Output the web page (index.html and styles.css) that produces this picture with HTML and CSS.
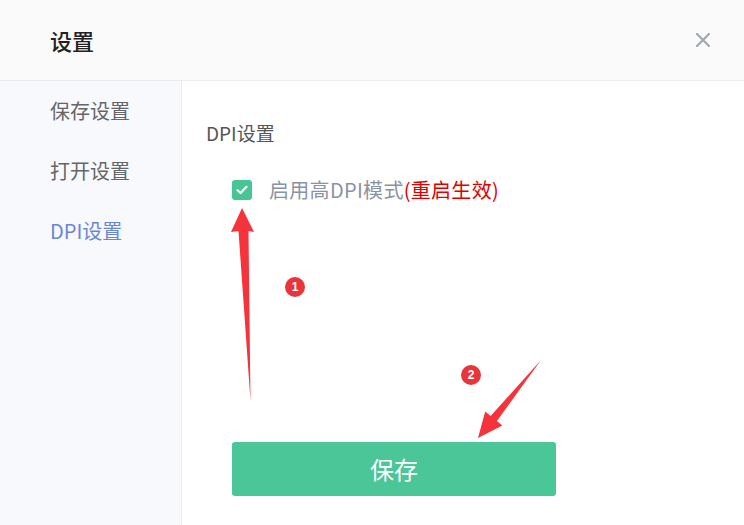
FILE: index.html
```html
<!DOCTYPE html>
<html lang="zh-CN">
<head>
    <meta charset="UTF-8">
    <meta name="viewport" content="width=device-width, initial-scale=1.0">
    <title>设置</title>
    <link rel="stylesheet" href="styles.css">
</head>
<body>
    <div class="dialog">
        <div class="header">
            <h1 class="title">设置</h1>
            <svg class="close" width="14" height="14" viewBox="0 0 14 14">
                <path d="M1 1L13 13M13 1L1 13" stroke="#a3a8b0" stroke-width="2.2" stroke-linecap="square"/>
            </svg>
        </div>
        <div class="body">
            <ul class="menu">
                <li>保存设置</li>
                <li>打开设置</li>
                <li class="active">DPI设置</li>
            </ul>
            <div class="content">
                <h2 class="section-title">DPI设置</h2>
                <label class="check-row">
                    <span class="checkbox">
                        <svg width="12" height="10" viewBox="0 0 12 10">
                            <path d="M1.5 5.2L4.6 8L10.5 1.8" fill="none" stroke="#fff" stroke-width="2.2" stroke-linecap="round" stroke-linejoin="round"/>
                        </svg>
                    </span>
                    <span class="check-label">启用高DPI模式<span class="warn">(重启生效)</span></span>
                </label>
                <button class="save-btn">保存</button>
            </div>
        </div>

        <!-- annotations -->
        <svg class="marks" width="744" height="525" viewBox="0 0 744 525">
            <polygon points="242,208 254,232 248.5,231 250.5,401 238.5,231 231,232" fill="#f5333a"/>
            <polygon points="478,438 485.2,411.6 490.6,416 541,360 496.9,421 502.3,425.4" fill="#f5333a"/>
        </svg>
        <span class="badge badge-1">1</span>
        <span class="badge badge-2">2</span>
    </div>
</body>
</html>
```

FILE: styles.css
```css
body {
    margin: 0;
    padding: 0;
    font-family: "Noto Sans CJK SC", "Noto Sans", sans-serif;
    background-color: #fff;
}
.dialog {
    position: relative;
    width: 744px;
    height: 525px;
    overflow: hidden;
    display: flex;
    flex-direction: column;
}
.header {
    height: 80px;
    flex: none;
    display: flex;
    align-items: center;
    justify-content: space-between;
    padding: 0 34px 0 50px;
    background-color: #fafafa;
    border-bottom: 1px solid #ececec;
}
.title {
    margin: 0;
    font-size: 22px;
    font-weight: 500;
    color: #222;
    line-height: 30px;
}
.close {
    display: block;
}
.body {
    flex: 1;
    display: flex;
}
.menu {
    width: 182px;
    flex: none;
    margin: 0;
    padding: 16px 0 0 50px;
    box-sizing: border-box;
    list-style: none;
    background-color: #f7f9fc;
    border-right: 1px solid #ececec;
    display: flex;
    flex-direction: column;
    gap: 32px;
}
.menu li {
    font-size: 20px;
    line-height: 28px;
    color: #666;
}
.menu li.active {
    color: #6a86d8;
}
.content {
    flex: 1;
    padding: 40px 0 0 24px;
    display: flex;
    flex-direction: column;
    align-items: flex-start;
}
.section-title {
    margin: 0;
    font-size: 19px;
    font-weight: normal;
    line-height: 24px;
    color: #555;
}
.check-row {
    display: flex;
    align-items: center;
    gap: 17px;
    margin: 33px 0 0 26px;
    height: 24px;
}
.checkbox {
    width: 20px;
    height: 20px;
    border-radius: 3px;
    background-color: #48c595;
    display: flex;
    align-items: center;
    justify-content: center;
}
.checkbox svg {
    display: block;
}
.check-label {
    font-size: 20px;
    line-height: 24px;
    letter-spacing: 0.3px;
    color: #8a93a3;
}
.warn {
    color: #e00000;
}
.save-btn {
    margin: 240px 0 0 26px;
    width: 324px;
    height: 54px;
    border: none;
    border-radius: 3px;
    background-color: #4ac699;
    color: #fff;
    font-family: inherit;
    font-size: 24px;
    line-height: 54px;
    padding: 0;
}
.marks {
    position: absolute;
    left: 0;
    top: 0;
    pointer-events: none;
}
.badge {
    position: absolute;
    width: 20px;
    height: 20px;
    border-radius: 50%;
    background-color: #e8353a;
    color: #fff;
    font-family: "Liberation Sans", Arial, sans-serif;
    font-size: 12px;
    font-weight: bold;
    line-height: 20px;
    text-align: center;
}
.badge-1 {
    left: 285px;
    top: 277px;
}
.badge-2 {
    left: 461px;
    top: 365px;
}
```
